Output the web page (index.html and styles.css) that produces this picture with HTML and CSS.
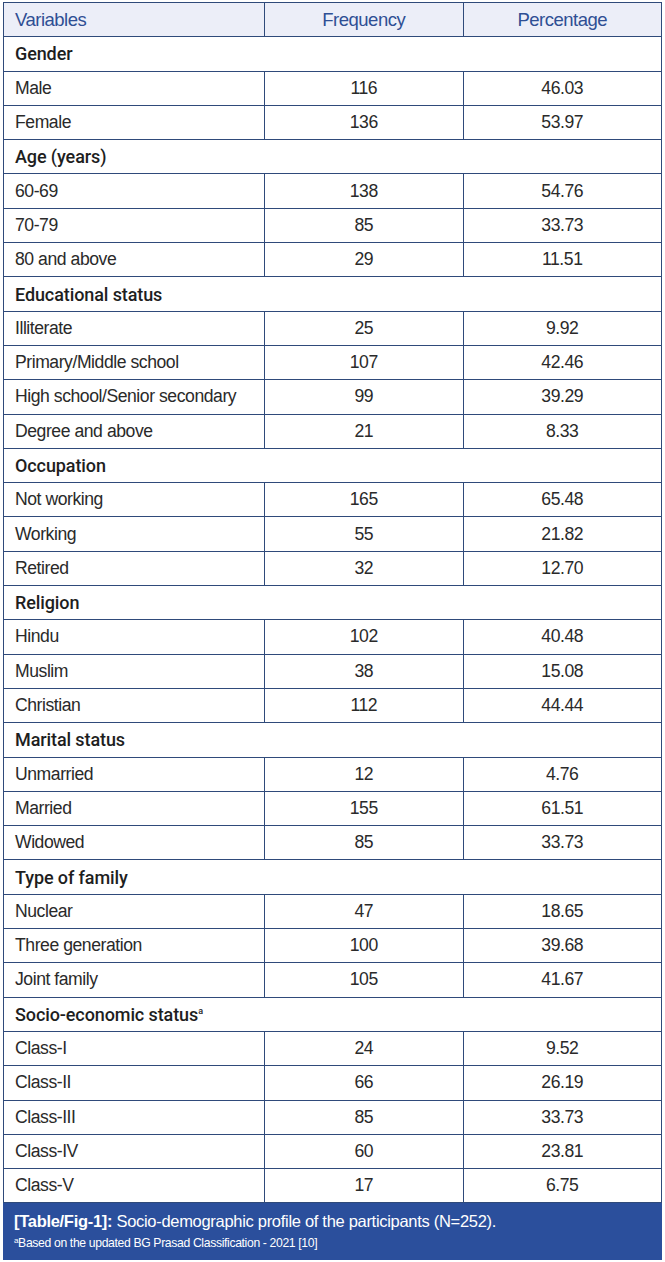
FILE: index.html
```html
<!DOCTYPE html>
<html>
<head>
<meta charset="utf-8">
<link rel="stylesheet" href="styles.css">
</head>
<body>
<div class="figure">
<table class="data">
<thead>
<tr><th class="var">Variables</th><th>Frequency</th><th>Percentage</th></tr>
</thead>
<tbody>
<tr class="sec"><td colspan="3">Gender</td></tr>
<tr><td>Male</td><td>116</td><td>46.03</td></tr>
<tr><td>Female</td><td>136</td><td>53.97</td></tr>
<tr class="sec"><td colspan="3">Age (years)</td></tr>
<tr><td>60-69</td><td>138</td><td>54.76</td></tr>
<tr><td>70-79</td><td>85</td><td>33.73</td></tr>
<tr><td>80 and above</td><td>29</td><td>11.51</td></tr>
<tr class="sec"><td colspan="3">Educational status</td></tr>
<tr><td>Illiterate</td><td>25</td><td>9.92</td></tr>
<tr><td>Primary/Middle school</td><td>107</td><td>42.46</td></tr>
<tr><td>High school/Senior secondary</td><td>99</td><td>39.29</td></tr>
<tr><td>Degree and above</td><td>21</td><td>8.33</td></tr>
<tr class="sec"><td colspan="3">Occupation</td></tr>
<tr><td>Not working</td><td>165</td><td>65.48</td></tr>
<tr><td>Working</td><td>55</td><td>21.82</td></tr>
<tr><td>Retired</td><td>32</td><td>12.70</td></tr>
<tr class="sec"><td colspan="3">Religion</td></tr>
<tr><td>Hindu</td><td>102</td><td>40.48</td></tr>
<tr><td>Muslim</td><td>38</td><td>15.08</td></tr>
<tr><td>Christian</td><td>112</td><td>44.44</td></tr>
<tr class="sec"><td colspan="3">Marital status</td></tr>
<tr><td>Unmarried</td><td>12</td><td>4.76</td></tr>
<tr><td>Married</td><td>155</td><td>61.51</td></tr>
<tr><td>Widowed</td><td>85</td><td>33.73</td></tr>
<tr class="sec"><td colspan="3">Type of family</td></tr>
<tr><td>Nuclear</td><td>47</td><td>18.65</td></tr>
<tr><td>Three generation</td><td>100</td><td>39.68</td></tr>
<tr><td>Joint family</td><td>105</td><td>41.67</td></tr>
<tr class="sec"><td colspan="3">Socio-economic status<sup>a</sup></td></tr>
<tr><td>Class-I</td><td>24</td><td>9.52</td></tr>
<tr><td>Class-II</td><td>66</td><td>26.19</td></tr>
<tr><td>Class-III</td><td>85</td><td>33.73</td></tr>
<tr><td>Class-IV</td><td>60</td><td>23.81</td></tr>
<tr><td>Class-V</td><td>17</td><td>6.75</td></tr>
</tbody>
</table>
<div class="caption">
<p class="title"><b>[Table/Fig-1]:</b> Socio-demographic profile of the participants (N=252).</p>
<p class="note"><sup>a</sup>Based on the updated BG Prasad Classification - 2021 [10]</p>
</div>
</div>
</body>
</html>
```
FILE: styles.css
```css
html, body {
  margin: 0;
  padding: 0;
  background: #ffffff;
}
body {
  padding: 2px 3px 0 3px;
  font-family: "Liberation Sans", Arial, sans-serif;
  color: #2a2a2a;
}
.figure {
  width: 659px;
}
.data {
  width: 659px;
  border-collapse: collapse;
  table-layout: fixed;
  font-size: 17.6px;
  letter-spacing: -0.45px;
}
.data th, .data td {
  border: 1px solid #2f4a7a;
  height: 33.3px;
  padding: 0;
  text-align: center;
  font-weight: normal;
}
.data th:first-child, .data td:first-child {
  width: 249px;
  text-align: left;
  padding-left: 11px;
}
.data thead th {
  background: #eceef8;
  color: #2f4f94;
  font-size: 18.5px;
  letter-spacing: -0.5px;
}
.data tr.sec td {
  font-family: Roboto, "Liberation Sans", sans-serif;
  font-weight: 500;
  font-size: 18px;
  color: #1e1e1e;
  letter-spacing: -0.1px;
}
.data sup {
  font-size: 9px;
  vertical-align: 7px;
  line-height: 0;
}
.caption {
  background: #2b4f9c;
  color: #ffffff;
  padding: 6px 11px 6px 11px;
  height: 45px;
}
.caption p {
  margin: 0;
}
.caption .title {
  font-size: 16.5px;
  letter-spacing: -0.3px;
  line-height: 24px;
}
.caption .note {
  font-size: 12.2px;
  letter-spacing: -0.35px;
  line-height: 20px;
}
.caption sup {
  font-size: 8px;
  vertical-align: 4px;
  line-height: 0;
}
```
